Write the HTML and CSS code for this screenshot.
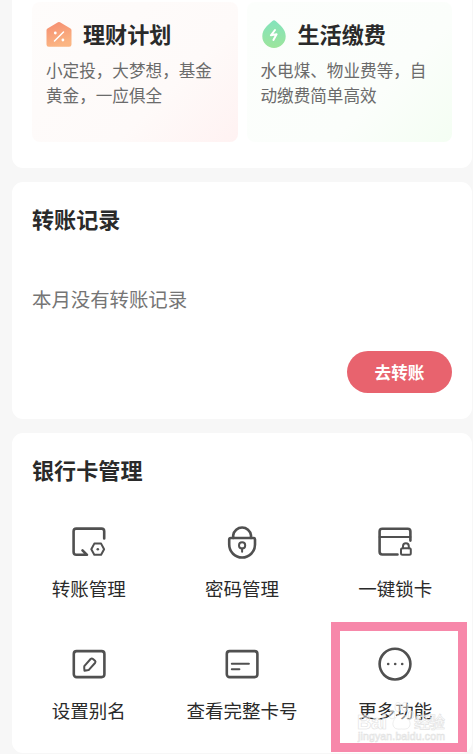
FILE: index.html
```html
<!DOCTYPE html>
<html lang="zh-CN">
<head>
  <meta charset="UTF-8" />
  <title>银行卡管理</title>
  <link rel="stylesheet" href="styles.css">
</head>
<body>
  <div class="page">
    <section class="card promo">
      <div class="tile tile-red">
        <div class="tile-head">
          <svg width="26" height="26" viewBox="0 0 26 26">
            <defs>
              <linearGradient id="orange" x1="0" y1="0" x2="0.3" y2="1">
                <stop offset="0" stop-color="#f58c70" />
                <stop offset="1" stop-color="#fbb583" />
              </linearGradient>
            </defs>
            <path d="M12 1.3Q13 .7 14 1.3L24.5 7.4Q25.5 8 25.5 9.2V23.5Q25.5 25.8 23.2 25.8H2.8Q.5 25.8 .5 23.5V9.2Q.5 8 1.5 7.4Z" fill="url(#orange)" />
            <path d="M8.5 20L17.5 11" stroke="#fff" stroke-width="1.5" stroke-linecap="round" />
            <circle cx="9.3" cy="12" r="1.4" fill="#fff" />
            <circle cx="16.9" cy="19" r="1.4" fill="#fff" />
          </svg>
          <h3>理财计划</h3>
        </div>
        <p>小定投，大梦想，基金黄金，一应俱全</p>
      </div>
      <div class="tile tile-green">
        <div class="tile-head">
          <svg width="26" height="28" viewBox="0 0 26 28">
            <defs>
              <linearGradient id="green" x1="0" y1="0" x2="0" y2="1">
                <stop offset="0" stop-color="#83e3bc" />
                <stop offset="1" stop-color="#9de59c" />
              </linearGradient>
            </defs>
            <path d="M11.4 1Q13 -.4 14.6 1C18 4.2 24.7 8.6 24.7 16.2A11.7 11.7 0 0 1 1.3 16.2C1.3 8.6 8 4.2 11.4 1Z" fill="url(#green)" />
            <path d="M14 10L9.9 15.3L15.6 14.3L12.4 20" fill="none" stroke="#fff" stroke-width="2" stroke-linejoin="round" stroke-linecap="round" />
          </svg>
          <h3>生活缴费</h3>
        </div>
        <p>水电煤、物业费等，自动缴费简单高效</p>
      </div>
    </section>

    <section class="card records">
      <h2>转账记录</h2>
      <p class="empty">本月没有转账记录</p>
      <button class="transfer">去转账</button>
    </section>

    <section class="card manage">
      <h2>银行卡管理</h2>
      <div class="grid">
        <div class="item">
          <svg class="icon" viewBox="0 0 36 36">
            <path d="M33.2 14.5V7.3Q33.2 4.6 30.5 4.6H5.3Q2.6 4.6 2.6 7.3V28Q2.6 30.8 5.3 30.8H16L11.5 26.3" />
            <path class="thin" d="M23.3 19.6H30.1L33.1 25.2L30.1 30.8H23.3L20.3 25.2Z" />
            <circle class="dot" cx="26.8" cy="25.2" r="1.3" />
          </svg>
          <span>转账管理</span>
        </div>
        <div class="item">
          <svg class="icon" viewBox="0 0 36 36">
            <path d="M9.2 14V11.2A9 9 0 0 1 27 11.2V14" />
            <path d="M6.8 14H29.4Q31 14 31 15.6V20.6A12.9 12.9 0 0 1 5.2 20.6V15.6Q5.2 14 6.8 14Z" />
            <circle class="thin" cx="18.1" cy="21.4" r="3.1" />
            <path class="thin" d="M18.1 24.5V27.8" />
          </svg>
          <span>密码管理</span>
        </div>
        <div class="item">
          <svg class="icon" viewBox="0 0 36 36">
            <path d="M33.4 16.6V7.4Q33.4 4.7 30.7 4.7H5.3Q2.6 4.7 2.6 7.4V27.8Q2.6 30.5 5.3 30.5H20.5" />
            <path class="thin" d="M2.6 13H33.4" />
            <path class="thin" d="M26 24.2V22.2A2.9 2.9 0 0 1 31.8 22.2V24.2" />
            <rect class="thin" x="24" y="24.2" width="9.8" height="6.6" rx="1.5" />
          </svg>
          <span>一键锁卡</span>
        </div>
        <div class="item">
          <svg class="icon" viewBox="0 0 36 36">
            <rect x="2.8" y="5.1" width="30.6" height="26" rx="2.8" />
            <path class="thin" d="M13.3 20.2L19.6 13Q20.8 12 22 13L24 14.7Q25 15.8 24 17L17.6 24.1L13.5 24.7Q13 22.4 13.3 20.2Z" />
          </svg>
          <span>设置别名</span>
        </div>
        <div class="item">
          <svg class="icon" viewBox="0 0 36 36">
            <rect x="2.8" y="5.1" width="30.6" height="26" rx="2.8" />
            <path class="thin" d="M7.8 17.7H24.9M7.8 23.3H15.4" />
          </svg>
          <span>查看完整卡号</span>
        </div>
        <div class="item">
          <svg class="icon" viewBox="0 0 36 36">
            <circle cx="18" cy="18.1" r="15.4" />
            <circle class="dot" cx="11.2" cy="18" r="1.3" />
            <circle class="dot" cx="18.2" cy="18" r="1.3" />
            <circle class="dot" cx="25.2" cy="18" r="1.3" />
          </svg>
          <span>更多功能</span>
          <div class="watermark">
            <svg width="92" height="44" viewBox="0 0 92 44">
              <text class="wm-logo" x="0" y="30" textLength="30">Bai</text>
              <g class="paw">
                <ellipse cx="35" cy="16" rx="3" ry="4" />
                <ellipse cx="41" cy="8" rx="3" ry="4.5" />
                <ellipse cx="48" cy="8" rx="3" ry="4.5" />
                <ellipse cx="54" cy="16" rx="3" ry="4" />
                <path d="M44.5 15C49 15 54 22 53 26Q52 31 44.5 30Q37 31 36 26C35 22 40 15 44.5 15Z" />
              </g>
              <text class="wm-name" x="57" y="29" textLength="31">经验</text>
              <text class="wm-url" x="1" y="41" textLength="87">jingyan.baidu.com</text>
            </svg>
          </div>
        </div>
      </div>
    </section>
    <div class="highlight"></div>
  </div>
</body>
</html>
```
FILE: styles.css
```css
* {
  box-sizing: border-box;
}

body {
  margin: 0;
  background: #f7f7f7;
  color: #2a2a2a;
  font-family: "Noto Sans CJK SC", sans-serif;
}

.page {
  position: relative;
  height: 754px;
  padding: 0 1px 0 12px;
  display: flex;
  flex-direction: column;
  gap: 14px;
  overflow: hidden;
}

.card {
  background: #fff;
  border-radius: 11px;
}

h2, h3, p {
  margin: 0;
}

h2, h3 {
  font-size: 22.1px;
  line-height: 32px;
  font-weight: 700;
}

/* promo tiles */
.promo {
  height: 168px;
  padding: 2px 20px 26px;
  border-radius: 0 0 11px 11px;
  display: flex;
  gap: 9px;
}

.tile {
  flex: 1;
  border-radius: 8px;
  padding: 15px 14px 0;
}

.tile-red {
  background: linear-gradient(135deg, #fefcfb 0%, #fefaf9 65%, #fff2f2 100%);
}

.tile-green {
  background: linear-gradient(135deg, #fcfefc 0%, #fbfefb 65%, #f4fef3 100%);
}

.tile-head {
  display: flex;
  align-items: center;
  gap: 11px;
  height: 32px;
}

.tile-head svg {
  margin-top: 1px;
}

.tile p {
  margin-top: 9px;
  font-size: 16.6px;
  line-height: 25px;
  color: #6b6b6b;
}

/* transfer records */
.records {
  height: 237px;
  padding: 20px 20px 0;
  display: flex;
  flex-direction: column;
}

.empty {
  margin-top: 51px;
  font-size: 19.4px;
  line-height: 28px;
  color: #757575;
}

.transfer {
  align-self: flex-end;
  margin-top: 38px;
  width: 105px;
  height: 42px;
  padding: 0;
  border: none;
  border-radius: 21px;
  background: #e8636e;
  color: #fff;
  font-family: inherit;
  font-size: 16.6px;
  font-weight: 700;
}

/* card management */
.manage {
  height: 320px;
  padding-top: 20px;
}

.manage h2 {
  padding-left: 20px;
}

.grid {
  display: grid;
  grid-template-columns: repeat(3, 1fr);
  grid-auto-rows: 122px;
  padding-top: 39px;
}

.item {
  position: relative;
  display: flex;
  flex-direction: column;
  align-items: center;
  font-size: 18.5px;
  line-height: 28px;
  white-space: nowrap;
}

.icon {
  width: 36px;
  height: 36px;
  margin-bottom: 14px;
  fill: none;
  stroke: #505050;
  stroke-width: 2.6;
  stroke-linecap: round;
  stroke-linejoin: round;
}

.icon .thin {
  stroke-width: 2;
}

.icon .dot {
  fill: #505050;
  stroke: none;
}

/* lies over the last label */
.watermark {
  position: absolute;
  left: 38px;
  top: 53px;
  line-height: 0;
}

.watermark text,
.paw {
  fill: rgba(255, 255, 255, 0.45);
  stroke: #e2e2e2;
  stroke-width: 0.6;
}

.wm-logo {
  font: 700 20px "Liberation Sans", sans-serif;
}

.wm-name {
  font: 500 16px "Noto Sans CJK SC", sans-serif;
}

.wm-url {
  font: 10.5px "Liberation Sans", sans-serif;
}

.highlight {
  position: absolute;
  left: 331px;
  top: 622px;
  width: 136px;
  height: 130px;
  border: 9px solid #f788aa;
}
```
